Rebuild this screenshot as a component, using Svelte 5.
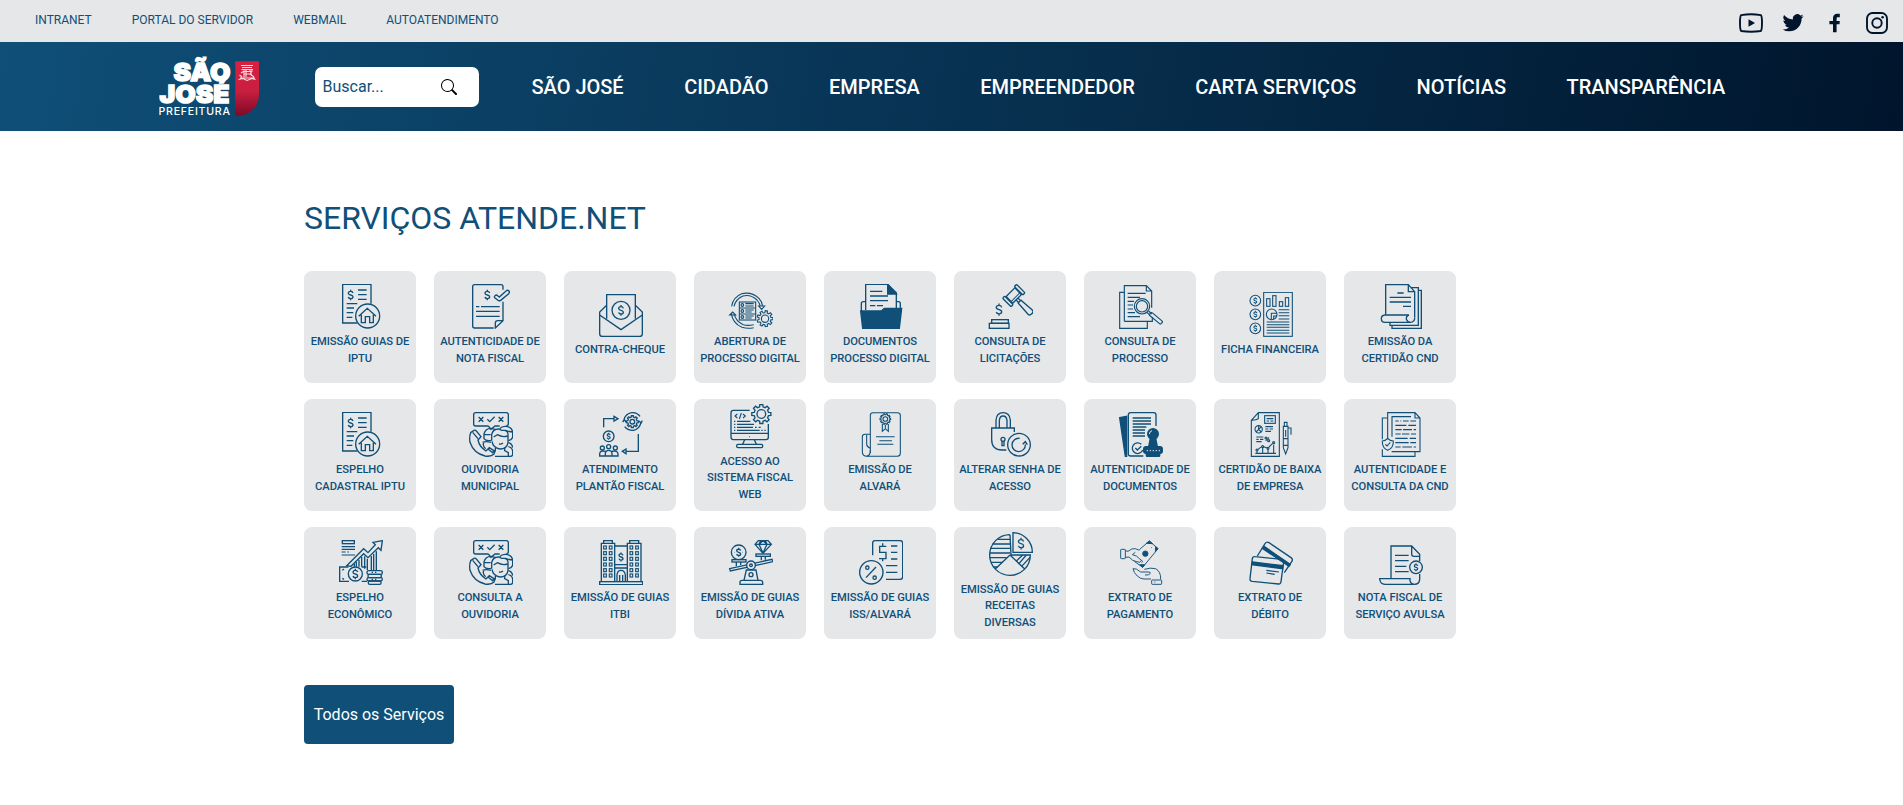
<script>
  const BLUE = '#0f4f78';
  const PANEL = '#e6e7e9';

  const usd = (x, y, s = 1, w = 4) =>
    `<path transform="translate(${x} ${y}) scale(${s})" stroke-width="${w / s}" d="M7-6C6-10 3-11 0-11C-4-11-7-9-7-5.5C-7-2-4-1 0 0C4 1 7 2 7 5.5C7 9 4 11 0 11C-3 11-6 10-7 6M0-16V-11M0 11V16"/>`;

  const gear = (cx, cy, R, r, n) => {
    const step = (Math.PI * 2) / n;
    const pts = [];
    for (let i = 0; i < n; i++) {
      const a = i * step;
      for (const [off, rad] of [[-0.3, r], [-0.2, R], [0.2, R], [0.3, r]]) {
        pts.push(`${(cx + rad * Math.cos(a + off * step)).toFixed(1)} ${(cy + rad * Math.sin(a + off * step)).toFixed(1)}`);
      }
    }
    return `<path d="M${pts.join('L')}Z"/>`;
  };

  const rect = (x, y, w, h, extra = '') => `<rect x="${x}" y="${y}" width="${w}" height="${h}" ${extra}/>`;
  const circle = (x, y, r, extra = '') => `<circle cx="${x}" cy="${y}" r="${r}" ${extra}/>`;
  const path = (d, extra = '') => `<path d="${d}" ${extra}/>`;
  const solid = `fill="${BLUE}"`;
  const blank = `fill="${PANEL}"`;

  const windows = (x0) =>
    [84, 101, 118, 135, 152, 168]
      .map((y) => rect(x0, y, 8, 9, 'stroke-width="3.4"') + rect(x0 + 17, y, 8, 9, 'stroke-width="3.4"'))
      .join('');

  const icons = {
    iptu: {
      at: [126, 282],
      art:
        path('M187 399H143V283H228V341') + usd(167, 315) +
        path('M189 300H215M189 314H215M189 328H215M155 341H187M155 354H177M155 368H175M155 382H172') +
        circle(218, 378, 36) + path('M191 379L217 355L243 379M199 374V398H211V380H224V398H235V374')
    },
    nota: {
      at: [516, 282],
      art:
        path('M596 414H539Q533 414 533 408V290Q533 284 539 284H618Q624 284 624 290V299M624 335V392L601 414V399Q601 392 608 392H624') +
        path('M543 350H553M558 350H614M543 364H614M543 379H614') + usd(577, 315) +
        path('M600 317Q604 313 608 317L613 321L634 302Q638 299 642 303Q645 306 641 311L617 331Q612 334 608 330L600 324Q596 320 600 317Z')
    },
    envelope: {
      at: [906, 306],
      art:
        path('M935 386V314H1021V386') + circle(978, 361, 27) + usd(978, 361) +
        path('M935 346L914 366V431Q914 439 922 439H1034Q1042 439 1042 431V366L1021 346M914 375L978 419L1042 375')
    },
    processo: {
      at: [126, 72],
      w: 3.3,
      art:
        rect(163, 126, 49, 54) + path('M163 144H212M163 162H212M181 131H206M181 138H206M181 150H206M181 156H200M181 168H206M181 174H200') +
        circle(172, 135, 4) + circle(172, 153, 4) + circle(172, 171, 4) +
        path('M140 139Q143 112 170 101Q199 94 222 115Q232 126 233 139M147 139Q152 117 174 108Q197 102 216 120Q224 129 226 139M221 138H239L230 148Z') +
        path('M139 160Q143 190 171 202Q188 207 206 203M147 160Q152 184 175 194Q188 198 206 194M134 165L143 156L152 165Z') +
        gear(240, 176, 24, 18, 9) + circle(240, 176, 11)
    },
    pasta: {
      at: [516, 72],
      art:
        path('M542 150V73H608L634 98V147') + path('M608 73V102H634Z', solid) +
        path('M555 94H592M555 108H609M555 122H609M555 137H571M576 137H594') +
        path('M529 153V131Q529 125 535 125H541M634 125H640Q646 125 646 131V147') +
        path('M527 153H589L598 145H650L643 205H533Z', solid)
    },
    martelo: {
      at: [906, 72],
      art:
        usd(942, 149, 1.15) + rect(920, 179, 50, 11) + rect(913, 190, 59, 15) +
        `<g transform="translate(986 107) rotate(-45)">` + rect(-18, -14, 37, 28) +
        rect(-29, -18, 9, 36, 'rx="3"') + rect(21, -18, 9, 36, 'rx="3"') +
        path('M-4 14V25M4 14V25') + path('M-6 25H6L9 70Q9 77 0 77Q-9 77-9 70Z') + path('M-18 7H19', 'stroke-width="3"') + '</g>'
    },
    lupa: {
      at: [126, 72],
      w: 3.5,
      art:
        path('M148 97H134V205H217V184') + path('M148 184V77H214L230 93V143M232 172V184H148M214 77V93H230') +
        path('M158 100H212M158 112H195M158 124H177M158 135H174M158 147H174M158 158H180M158 170H195') +
        circle(201, 139, 23) + circle(201, 139, 17) + path('M216 157L225 166M221 153L230 162') +
        `<g transform="translate(226 160) rotate(40)">` + rect(0, -5, 45, 11, 'rx="4"') + '</g>'
    },
    ficha: {
      at: [516, 96],
      w: 3.2,
      art:
        [122, 163, 205].map((y) => circle(541, y, 16) + usd(541, y, 0.65, 3)).join('') +
        rect(566, 97, 86, 132) + rect(575, 116, 10, 23) + rect(593, 107, 10, 32) + rect(613, 125, 10, 14) + rect(631, 113, 10, 26) +
        circle(590, 163, 16) + path('M606 160H589V178M606 168H596V178') +
        path('M611 149H643M611 158H643M611 167H643M611 177H643M575 186H643M575 194H643M575 202H643M575 211H643M575 219H643')
    },
    certidao: {
      at: [906, 72],
      art:
        path('M932 164V74H1000L1019 95V172M1000 74V95H1019M1006 83H1030V196H945V188M1030 91H1039V205H951V197') +
        path('M967 99H986M944 112H1008M944 126H1008M984 139H1008') +
        path('M1002 165H930Q919 166 919 176Q919 187 930 187H1006Q1020 186 1019 172M1002 165Q993 168 994 178Q998 187 1006 187')
    },
    ouvidoria: {
      at: [516, 66],
      art:
        path('M580 108H542Q536 108 536 102V74Q536 68 542 68H634Q640 68 640 74V102Q640 107 634 107M580 108L588 118L600 108H614') +
        path('M551 81L565 95M565 81L551 95M577 88L584 95L599 80M611 81L625 95M625 81L611 95') +
        path('M527 128L537 121Q541 119 544 123L558 140L549 150Q553 170 573 183L583 173L600 184L597 192Q589 201 570 198Q536 190 525 157Q522 141 527 128Z') +
        path('M533 127L549 146M579 177L595 190') +
        path('M588 151Q573 154 567 146V132Q571 115 588 115L601 118M568 134H587') +
        path('M590 152V134Q593 117 611 117L620 121H632Q640 124 639 139V158Q636 177 615 177Q594 173 591 154M596 141L607 134Q622 143 637 138M612 162Q618 164 624 159') +
        path('M614 116Q620 108 633 109Q651 111 653 127V142Q650 150 640 152M630 122L652 126') +
        path('M563 157Q572 153 588 157M566 158Q562 168 572 176M601 174V182L591 188M629 174V182L640 188V199H600M640 170Q654 173 653 187V193Q653 199 646 199H640M640 158Q651 160 653 173')
    },
    plantao: {
      at: [906, 66],
      art:
        path('M926 112V86H957M957 79L969 86L957 93Z') + gear(1012, 95, 18, 14, 8) + circle(1012, 95, 7) +
        path('M987 89Q991 72 1010 68Q1026 67 1035 79M1038 97Q1034 116 1016 121Q998 122 989 110') +
        path('M983 96L988 89L993 96M1032 93L1038 99L1042 92') +
        circle(941, 139, 16) + usd(941, 139, 0.65, 3.5) + path('M1030 132V184H993M993 177L982 184L993 191Z') +
        circle(922, 174, 6) + circle(941, 170, 6) + circle(961, 174, 6) +
        path('M931 198V189Q932 181 941 181Q950 181 951 189V198M931 184Q914 180 914 192V198H969V192Q968 180 951 184')
    },
    monitor: {
      at: [126, 42],
      art:
        path('M194 61H145Q138 61 138 68V142Q138 149 145 149H243Q250 149 250 142V102M138 130H250M192 140H194') +
        path('M179 149L173 163M208 149L214 163') + rect(155, 163, 78, 10, 'rx="4"') +
        gear(229, 72, 29, 22, 8) + circle(229, 72, 13) +
        path('M157 72L150 78L157 84M174 72L181 78L174 84M169 69L163 87', 'stroke-width="3.4"') +
        path('M147 94H151M156 94H196M147 103H151M156 103H207M147 112H151M156 112H204M210 112H215M221 112H227M147 121H151M156 121H224M229 121H233M238 121H242', 'stroke-width="3.4"')
    },
    alvara: {
      at: [516, 66],
      w: 3.2,
      art:
        path('M556 188V76Q556 68 564 68H637Q646 68 646 76V190Q646 199 637 199H546Q532 198 532 186V140Q532 133 540 133H556') +
        path('M545 134V163Q546 171 556 175M556 180Q557 196 545 199') + gear(601, 87, 16, 13, 10) + circle(601, 87, 7) +
        path('M592 102V124L601 116L610 124V102M601 104V114M573 140H629M583 152H621M577 163H625')
    },
    cadeado: {
      at: [906, 66],
      art:
        path('M964 180H951Q920 179 920 149V114H988V126') +
        path('M933 114V90Q935 68 954 68Q974 68 976 90V114M943 114V92Q944 78 954 78Q965 78 966 92V114') +
        circle(954, 148, 6) + path('M951 154V167H957V153') + circle(1002, 164, 34) +
        path('M1004 145A20 20 0 1 0 1021 163M1013 163L1021 155L1027 164')
    },
    carimbo: {
      at: [126, 66],
      art:
        path('M134 83L155 79V199H151Z', solid) + path('M205 198H167Q160 198 160 191V75Q160 68 167 68H236Q243 68 243 75V108') +
        path('M173 84H228M173 93H228M173 102H228M173 111H214M173 120H210M173 129H210M173 138H210') +
        path('M203 180A16 16 0 1 1 199 163M181 174L187 180L199 169') +
        circle(234, 132, 16, solid) + path('M226 145H242L247 170H221Z', solid) + rect(206, 170, 56, 20, 'rx="7" ' + solid) + rect(214, 190, 40, 9, 'rx="2" ' + solid) +
        path('M223 132Q224 124 231 122M215 182H219M224 182H228M233 182H237M242 182H246M251 182H255', `stroke="${PANEL}" stroke-width="3"`)
    },
    relatorio: {
      at: [516, 66],
      w: 3.3,
      art:
        path('M529 91L550 68H613V199H529ZM529 91Q545 90 550 86V68') + rect(569, 77, 32, 23) +
        path('M575 86H595M575 93H582M586 93H595M571 110H594M571 117H580M584 117H594M571 124H588') +
        circle(551, 118, 11) + path('M551 107V118L559 110M551 118L543 126M551 118L559 126') +
        path('M544 141H565M544 148H551M555 148H565M544 155H560M582 142L572 153') + circle(573, 144, 3) + circle(581, 152, 3) +
        path('M541 190H603M546 190V184M563 190V174M579 190V178M596 190V164M549 178L560 170M566 170L576 174M582 171L593 160') +
        circle(546, 180, 3) + circle(563, 170, 3) + circle(579, 175, 3) + circle(596, 158, 3) +
        path('M628 97H636V109H628ZM625 109H639V173L632 192L625 173ZM625 146H639M625 166H639M639 114H648V134M632 120V140')
    },
    escudo: {
      at: [906, 66],
      w: 3.3,
      art:
        path('M938 84H922V148M922 178V199H1020V185') + path('M938 148V68H1020L1035 84V185H950M1020 68V84H1035M951 140V80H1008') +
        path('M961 93H971M976 93H979M984 93H1001M1006 93H1023M961 106H994M1000 106H1023M961 119H980M984 119H1011M1016 119H1023M961 132H977M981 132H1003M1008 132H1023M961 145H998M1004 145H1023M961 158H1001M1006 158H1023M961 171H977M982 171H1011M1016 171H1023') +
        path('M938 145Q945 153 955 153Q956 174 938 181Q921 174 922 153Q931 153 938 145ZM931 163L936 168L946 157')
    },
    economico: {
      at: [126, 66],
      art:
        rect(142, 68, 36, 9) + path('M140 86H180M140 94H180M140 102H152M157 102H162M140 111H180', 'stroke-width="3.4"') +
        path('M155 143L206 92L219 104L241 80L234 73L262 68L258 97L250 89L219 119L206 107L168 145Z') +
        path('M184 132V146M192 125V146M200 117V146M209 115V152M217 122V156M229 114V156M236 108V156M244 100V156M178 138V146') +
        path('M160 147H134V190H162M200 147H214M200 190H216M142 157L147 153M142 181L147 184') + circle(181, 168, 21) + usd(181, 168) +
        rect(216, 158, 46, 11, 'rx="5"') + rect(219, 169, 40, 10, 'rx="4"') + rect(216, 179, 46, 10, 'rx="5"') + rect(220, 189, 38, 10, 'rx="4"') +
        path('M230 163H234M240 163H244M230 184H234M240 184H244')
    },
    predio: {
      at: [906, 66],
      art:
        path('M919 190V76H959V190M997 190V76H1038V190M926 76V68H952V76M1004 76V68H1031V76') + windows(926) + windows(1005) +
        path('M959 84H997M959 140H997M959 150H997M966 190V171Q967 157 978 157Q989 157 991 171V190M974 190V171M983 190V171') +
        usd(978, 117, 0.85) + rect(914, 191, 129, 9)
    },
    balanca: {
      at: [126, 66],
      art:
        circle(161, 103, 22) + usd(161, 103, 0.85) + path('M149 103H150M173 103H174') +
        path('M210 79L220 68H249L259 79L234 106ZM210 79H259M227 68L222 79L234 105L246 79L241 68M222 79L234 68L246 79') +
        rect(141, 125, 42, 7) + rect(213, 108, 43, 7) + path('M154 132V144M167 132V141M229 115V127M241 115V125') +
        path('M134 152L261 124L264 131L136 159Z') + circle(198, 142, 13, blank) + circle(198, 142, 4) +
        path('M184 156H213L219 187H177ZM165 199V193Q165 187 171 187H226Q233 187 233 193V199Z') + circle(198, 170, 6)
    },
    iss: {
      at: [516, 66],
      art:
        path('M563 112V75Q563 68 570 68H645Q653 68 653 75V176Q653 184 645 184H603') +
        path('M604 85H584V103H603V122H582M593 76V85M593 122V130M618 84H637M618 103H637M618 123H637M603 143H637M603 163H637') +
        circle(559, 163, 35) + circle(547, 149, 5) + circle(569, 179, 5) + path('M573 147L543 179')
    },
    pizza: {
      at: [906, 42],
      art:
        path('M975 50A61 61 0 1 0 1036 111H978L975 50M975 111L930 154M975 111L1020 154') + path('M984 44V103H1042A59 59 0 0 0 984 44Z') +
        path('M938 64H975M922 78H975M915 91H975M914 105H975M914 119H965M918 133H952M926 147H938M1013 111L994 129M1024 111L1002 137M1035 118L1010 145') + usd(1008, 77, 1.1)
    },
    maos: {
      at: [126, 66],
      w: 2.8,
      art:
        rect(137, 94, 14, 28, 'rx="2"') + path('M151 98L159 100Q170 90 181 92L193 97M151 118L162 117L173 127Q184 131 194 133L198 128M181 103L172 110Q186 112 193 122L203 130L200 134') +
        path('M193 95L223 69L249 92L203 148L178 130') + path('M223 69L233 77L214 76ZM249 92L241 101L242 86ZM203 148L194 140L209 140ZM228 89H230', solid) + circle(211, 107, 8, solid) +
        path('M174 152Q184 150 197 162H216Q226 160 226 166Q224 172 210 171M174 152Q176 164 187 174Q196 183 207 183H228M208 154Q226 148 242 152Q258 161 257 184') + rect(230, 186, 30, 13, 'rx="2"') + path('M238 192H241')
    },
    cartoes: {
      at: [516, 66],
      art:
        path('M547 114L570 77Q575 70 582 74L648 119Q655 124 650 131L628 164') + path('M567 85L646 139L642 145L562 91Z', solid) +
        path('M540 116L619 124Q627 125 626 132L618 191Q617 199 610 198L532 190Q524 189 525 182L532 122Q533 115 540 116Z') +
        path('M532 132L624 143L623 152L530 140Z', solid) + path('M574 157L612 162M574 165L599 169', 'stroke-width="3.4"')
    },
    avulsa: {
      at: [906, 66],
      art:
        path('M948 181V84H1010L1034 109V130M1010 84V108Q1010 115 1017 115H1034M960 112H1001M960 128H1001M960 145H994M960 161H1001') +
        circle(1023, 148, 19) + usd(1023, 148, 0.75, 3.4) +
        path('M1034 168V184Q1033 199 1018 199H930Q915 198 914 182H1005V188Q1007 198 1018 199')
    }
  };

  const services = [
    ['iptu', ['EMISSÃO GUIAS DE', 'IPTU']],
    ['nota', ['AUTENTICIDADE DE', 'NOTA FISCAL']],
    ['envelope', ['CONTRA-CHEQUE']],
    ['processo', ['ABERTURA DE', 'PROCESSO DIGITAL']],
    ['pasta', ['DOCUMENTOS', 'PROCESSO DIGITAL']],
    ['martelo', ['CONSULTA DE', 'LICITAÇÕES']],
    ['lupa', ['CONSULTA DE', 'PROCESSO']],
    ['ficha', ['FICHA FINANCEIRA']],
    ['certidao', ['EMISSÃO DA', 'CERTIDÃO CND']],
    ['iptu', ['ESPELHO', 'CADASTRAL IPTU']],
    ['ouvidoria', ['OUVIDORIA', 'MUNICIPAL']],
    ['plantao', ['ATENDIMENTO', 'PLANTÃO FISCAL']],
    ['monitor', ['ACESSO AO', 'SISTEMA FISCAL', 'WEB']],
    ['alvara', ['EMISSÃO DE', 'ALVARÁ']],
    ['cadeado', ['ALTERAR SENHA DE', 'ACESSO']],
    ['carimbo', ['AUTENTICIDADE DE', 'DOCUMENTOS']],
    ['relatorio', ['CERTIDÃO DE BAIXA', 'DE EMPRESA']],
    ['escudo', ['AUTENTICIDADE E', 'CONSULTA DA CND']],
    ['economico', ['ESPELHO', 'ECONÔMICO']],
    ['ouvidoria', ['CONSULTA A', 'OUVIDORIA']],
    ['predio', ['EMISSÃO DE GUIAS', 'ITBI']],
    ['balanca', ['EMISSÃO DE GUIAS', 'DÍVIDA ATIVA']],
    ['iss', ['EMISSÃO DE GUIAS', 'ISS/ALVARÁ']],
    ['pizza', ['EMISSÃO DE GUIAS', 'RECEITAS', 'DIVERSAS']],
    ['maos', ['EXTRATO DE', 'PAGAMENTO']],
    ['cartoes', ['EXTRATO DE', 'DÉBITO']],
    ['avulsa', ['NOTA FISCAL DE', 'SERVIÇO AVULSA']]
  ];

  const topLinks = ['INTRANET', 'PORTAL DO SERVIDOR', 'WEBMAIL', 'AUTOATENDIMENTO'];
  const menu = ['SÃO JOSÉ', 'CIDADÃO', 'EMPRESA', 'EMPREENDEDOR', 'CARTA SERVIÇOS', 'NOTÍCIAS', 'TRANSPARÊNCIA'];
</script>

<div class="topbar">
  <nav class="toplinks">
    {#each topLinks as link}<a href="#top">{link}</a>{/each}
  </nav>
  <div class="social">
    <svg viewBox="0 0 24 24" fill="none" stroke="#00152c" stroke-width="1.9">
      <path d="M2.2 4.1Q12 2.4 21.8 4.1Q23 5 23 12Q23 19 21.8 20Q12 21.6 2.2 20Q1 19 1 12Q1 5 2.2 4.1Z" />
      <path d="M9.5 8.2L16 12L9.5 15.8Z" fill="#00152c" stroke="none" />
    </svg>
    <svg viewBox="0 0 24 24" fill="#00152c">
      <path transform="translate(1.6 1.2) scale(.88)" d="M23.95 4.57a10 10 0 0 1-2.82.77 4.96 4.96 0 0 0 2.16-2.72c-.95.55-2 .95-3.13 1.18a4.92 4.92 0 0 0-8.38 4.48A13.93 13.93 0 0 1 1.64 3.16a4.92 4.92 0 0 0 1.52 6.57 4.9 4.9 0 0 1-2.23-.61v.06a4.92 4.92 0 0 0 3.95 4.83 5 5 0 0 1-2.21.08 4.94 4.94 0 0 0 4.6 3.42A9.87 9.87 0 0 1 0 19.54a13.99 13.99 0 0 0 7.56 2.21c9.05 0 14-7.5 14-13.98 0-.21 0-.42-.02-.63a9.94 9.94 0 0 0 2.41-2.57z" />
    </svg>
    <svg viewBox="0 0 24 24" fill="#00152c">
      <path d="M16.8 2.8V6.2H14.8C13.8 6.2 13.6 6.8 13.6 7.6V9.9H16.8L16.5 13.2H13.6V21.3H10V13.2H6.4V9.9H10V7.2C10 4.2 11.6 2.7 14.2 2.7Z" />
    </svg>
    <svg viewBox="0 0 24 24" fill="none" stroke="#00152c" stroke-width="1.9">
      <rect x="2" y="2" width="20" height="20" rx="5.5" />
      <circle cx="12" cy="12" r="4.7" />
      <circle cx="17.6" cy="6.3" r="1.3" fill="#00152c" stroke="none" />
    </svg>
  </div>
</div>

<header class="header">
  <svg class="logo" viewBox="159 55 101 63">
    <defs>
      <linearGradient id="shield" x1="0" y1="0" x2="0" y2="1">
        <stop offset="0" stop-color="#d8213f" />
        <stop offset=".55" stop-color="#c81e40" />
        <stop offset="1" stop-color="#7c0a25" />
      </linearGradient>
    </defs>
    <g fill="#fff" font-family="Inter, 'Open Sans', sans-serif">
      <text x="173.500" y="80.500" font-size="24.500" font-weight="900" textLength="57" lengthAdjust="spacingAndGlyphs" stroke="#fff" stroke-width="1.400">SÃO</text>
      <text x="159.500" y="102.500" font-size="25" font-weight="900" textLength="70" lengthAdjust="spacingAndGlyphs" stroke="#fff" stroke-width="1.400">JOSÉ</text>
      <text x="158.500" y="115" font-size="10.600" font-weight="500" textLength="71.500">PREFEITURA</text>
    </g>
    <path d="M235.3 61.3H259V93Q259 106 250 112Q244 116 235.3 116Z" fill="url(#shield)" />
    <g fill="none" stroke="#fff" stroke-width="1.1" opacity=".85">
      <path d="M241 65.500H253M242 67.500H252M241.500 69.500H253M243 71.500H251M241 73L244 71V77M246 70V77M249 71H252L250 74L254 77M244 74H252M240 78H255M239.500 75L242 77M238.500 79.500L243 78.500L247 80.500L252 78.500L255.500 79.500" />
    </g>
  </svg>
  <div class="search">
    <span>Buscar...</span>
    <svg width="16" height="16" viewBox="0 0 16 16" fill="#000">
      <path d="M11.742 10.344a6.500 6.500 0 1 0-1.397 1.398h-.001q.044.060.098.115l3.850 3.850a1 1 0 0 0 1.415-1.414l-3.850-3.850a1 1 0 0 0-.115-.100zM12 6.500a5.500 5.500 0 1 1-11 0 5.500 5.500 0 0 1 11 0" />
    </svg>
  </div>
  <nav class="menu">
    {#each menu as item}<a href="#menu">{item}</a>{/each}
  </nav>
</header>

<main>
  <h1>SERVIÇOS ATENDE.NET</h1>
  <div class="grid">
    {#each services as [name, lines]}
      <a class="card" href="#servico">
        <svg class="icon" viewBox="{icons[name].at[0]} {icons[name].at[1]} 138 135" stroke-width={icons[name].w ?? 4}>
          {@html icons[name].art}
        </svg>
        <span class="label">
          {#each lines as line}<span class="line">{line}</span>{/each}
        </span>
      </a>
    {/each}
  </div>
  <button>Todos os Serviços</button>
</main>

<style>
  :global(body) {
    background: #fff;
    font-family: Roboto, sans-serif;
    overflow: hidden;
  }
  a {
    color: inherit;
    text-decoration: none;
  }
  .topbar {
    display: flex;
    justify-content: space-between;
    height: 42px;
    padding: 0 14px 0 35px;
    box-sizing: border-box;
    background: #e6e7e9;
  }
  .toplinks {
    display: flex;
    gap: 40px;
    font-size: 12px;
    line-height: 40px;
    color: #0f4f78;
  }
  .social {
    display: flex;
    gap: 18px;
    padding-top: 11px;
  }
  .social svg {
    width: 24px;
    height: 24px;
  }
  .header {
    display: flex;
    align-items: center;
    height: 89px;
    padding-left: 159px;
    background: linear-gradient(100deg, #0f4f78 0%, #00152c 100%);
  }
  .logo {
    width: 101px;
    height: 63px;
  }
  .search {
    display: flex;
    align-items: center;
    justify-content: space-between;
    width: 164px;
    height: 40px;
    margin-left: 55px;
    padding: 0 22px 0 7.5px;
    box-sizing: border-box;
    border-radius: 7px;
    background: #fff;
    color: #0f4f78;
    font-size: 16px;
  }
  .menu {
    display: flex;
    gap: 60.500px;
    margin-left: 52.500px;
    padding-top: 1px;
    color: #fff;
    font-size: 20px;
    font-weight: 500;
    letter-spacing: -0.02px;
    white-space: nowrap;
  }
  main {
    width: 1152px;
    margin: 0 0 0 304px;
    padding-top: 68px;
  }
  h1 {
    margin: 0 0 33px;
    color: #0f4f78;
    font-size: 32px;
    font-weight: 400;
    line-height: 39px;
    letter-spacing: -0.03px;
  }
  .grid {
    display: grid;
    grid-template-columns: repeat(9, 112px);
    grid-auto-rows: 112px;
    gap: 16px 18px;
  }
  .card {
    display: flex;
    flex-direction: column;
    align-items: center;
    justify-content: center;
    border-radius: 8px;
    background: #e6e7e9;
  }
  .icon {
    flex: none;
    width: 46px;
    height: 45px;
    fill: none;
    stroke: #0f4f78;
  }
  .label {
    padding: 4.900px 0 2.500px;
    color: #0f4f78;
    font-size: 11.2px;
    font-weight: 500;
    line-height: 16.8px;
    letter-spacing: -0.06px;
    text-align: center;
    white-space: nowrap;
  }
  .line {
    display: block;
  }
  button {
    width: 150px;
    height: 59px;
    margin-top: 46px;
    padding: 0;
    border: 0;
    border-radius: 4px;
    background: #0f4f78;
    color: #fff;
    font-family: inherit;
    font-size: 16px;
  }
</style>
